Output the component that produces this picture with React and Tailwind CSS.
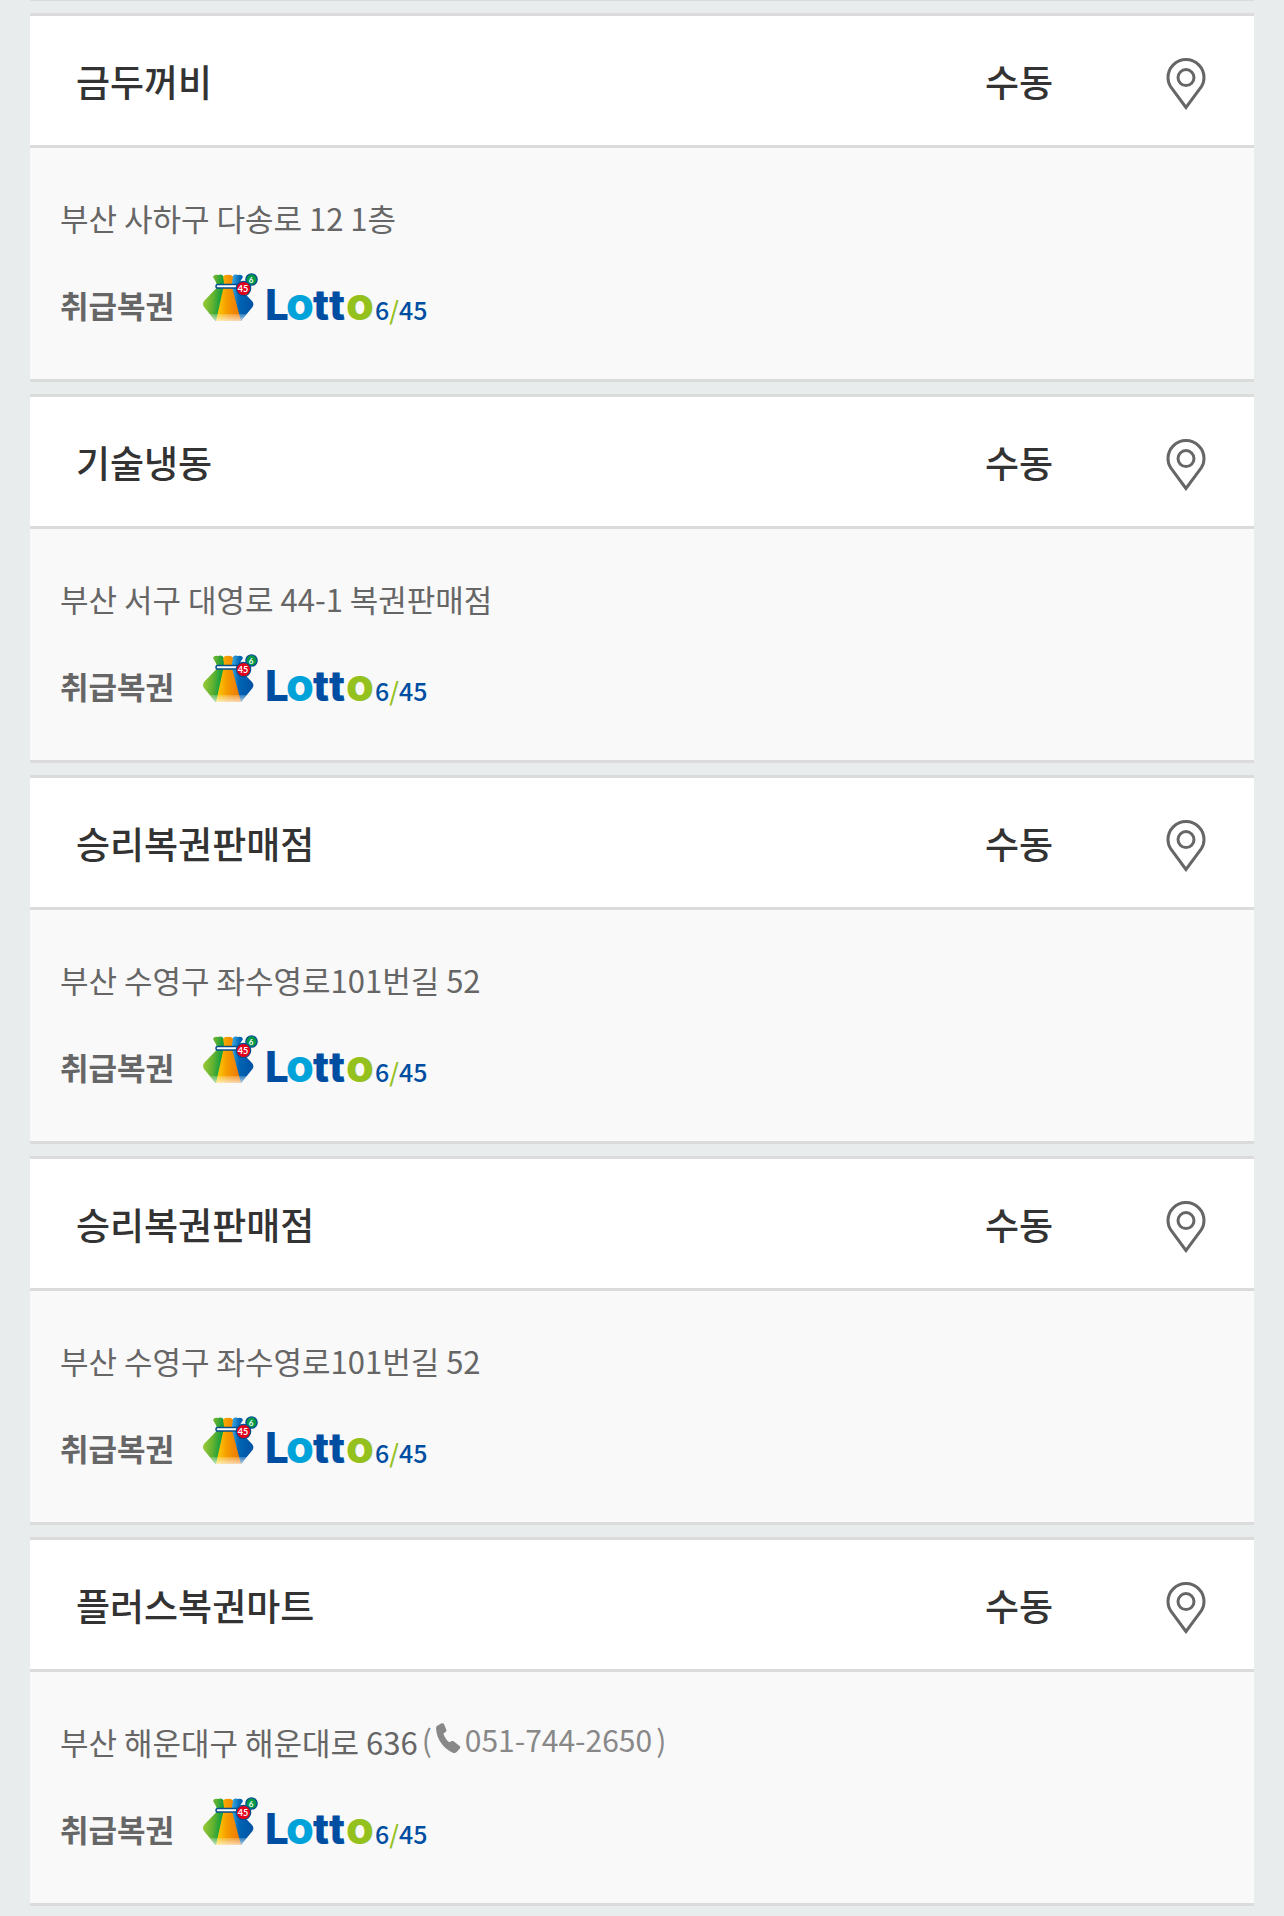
import React from "react";

const stores = [
  { id: 1, name: "금두꺼비", type: "수동", address: "부산 사하구 다송로 12 1층" },
  { id: 2, name: "기술냉동", type: "수동", address: "부산 서구 대영로 44-1 복권판매점" },
  { id: 3, name: "승리복권판매점", type: "수동", address: "부산 수영구 좌수영로101번길 52" },
  { id: 4, name: "승리복권판매점", type: "수동", address: "부산 수영구 좌수영로101번길 52" },
  { id: 5, name: "플러스복권마트", type: "수동", address: "부산 해운대구 해운대로 636", phone: "051-744-2650" },
];

function PinIcon() {
  return (
    <svg width="40" height="52" viewBox="0 0 40 52" fill="none" stroke="#666" strokeWidth="3" aria-hidden="true">
      <path d="M20 49.5 L4.6 28.6 C2.6 25.8 2 23 2 19.6 C2 9.6 10 1.6 20 1.6 C30 1.6 38 9.6 38 19.6 C38 23 37.4 25.8 35.4 28.6 Z" />
      <circle cx="20" cy="19.6" r="8" />
    </svg>
  );
}

function PhoneIcon() {
  return (
    <svg width="25" height="38" viewBox="0 0 25 38" fill="#888" aria-hidden="true">
      <path d="M1.2 3.4 L5.6 0.4 C6.6 -0.1 7.6 0.2 8 1.2 L10.4 8.6 C10.7 9.6 10.3 10.4 9.6 11 L7.4 12.8 C8.4 17 10.4 20.6 13.2 23.6 L15.4 22.2 C16.1 21.8 17 21.8 17.6 22.4 L23.6 28.2 C24.4 29.1 24.5 30 23.8 31 L20.4 35.8 C19.4 36.8 18 37 16.8 36.4 C7.6 31 1 20.4 0.1 7.6 C0 5.6 0.2 4.3 1.2 3.4 Z" transform="translate(0 3) scale(1 0.82)" />
    </svg>
  );
}

function LottoLogo({ id }) {
  return (
    <svg width="228" height="66" viewBox="0 -1 228 66" role="img" aria-label="Lotto 6/45">
      <defs>
        <linearGradient id={`green-${id}`} x1="0" y1="0.3" x2="1" y2="0.5">
          <stop offset="0" stopColor="#a5cd39" />
          <stop offset="0.45" stopColor="#5fb130" />
          <stop offset="0.8" stopColor="#009a44" />
        </linearGradient>
        <linearGradient id={`orange-${id}`} x1="0" y1="0" x2="1" y2="0">
          <stop offset="0" stopColor="#ffd200" />
          <stop offset="0.45" stopColor="#f59a00" />
          <stop offset="1" stopColor="#ec7404" />
        </linearGradient>
        <linearGradient id={`blue-${id}`} x1="0" y1="0" x2="1" y2="0.1">
          <stop offset="0" stopColor="#4ab5e8" />
          <stop offset="0.4" stopColor="#0065b5" />
          <stop offset="1" stopColor="#0052a4" />
        </linearGradient>
        <linearGradient id={`shine-${id}`} x1="0" y1="0" x2="0" y2="1">
          <stop offset="0" stopColor="#fff" stopOpacity="0.2" />
          <stop offset="1" stopColor="#fff" stopOpacity="0.7" />
        </linearGradient>
      </defs>

      {/* money bag */}
      <path d="M11 4 Q12 1 16 2 Q20 0.5 22 4 L22 14 L26 14 L15.5 48 L13.5 48 L2 34 Q0 31 2 28 L15.5 14 Q14 8 11 4 Z" fill={`url(#green-${id})`} />
      <path d="M30 4 Q32 0.5 36 2 Q40 1 41 4 Q37 9 36.5 14 L50 28 Q52.5 31 50.5 34 L39 48 L36 48 L29 14 Z" fill={`url(#blue-${id})`} />
      <path d="M21 4 Q23 1 26 2 Q29 1 31 4 Q29.5 9 30 14 L39 48 L14 48 L21.5 14 Q22.5 9 21 4 Z" fill={`url(#orange-${id})`} />
      <path d="M8 41 L45 41 L39 48 L13.5 48 Z" fill={`url(#shine-${id})`} />
      <rect x="14" y="11.5" width="24" height="3.6" rx="1.8" fill="#fff" stroke="#00508f" strokeWidth="1.5" />
      <circle cx="49.5" cy="6.5" r="5.6" fill="#009a44" stroke="#00508f" strokeWidth="1.4" />
      <circle cx="41.5" cy="15.5" r="7.2" fill="#e3001b" stroke="#00508f" strokeWidth="1.2" />
      <text x="49" y="9.5" textAnchor="middle" fontSize="8" className="font-['Lato'] font-bold" fill="#fff">6</text>
      <text x="41" y="19" textAnchor="middle" fontSize="9" className="font-['Lato'] font-bold" fill="#fff">45</text>

      {/* wordmark */}
      <text y="47" className="font-['Inter'] font-extrabold" fill="#004ea2">
        <tspan x="63" fontSize="42">L</tspan>
        <tspan x="84" fontSize="45" fill="#00a3d9">o</tspan>
        <tspan x="111" fontSize="42">t</tspan>
        <tspan x="127" fontSize="42">t</tspan>
        <tspan x="144" fontSize="45" fill="#95c11f">o</tspan>
      </text>
      <text x="173" y="47" fontSize="25" className="font-medium" fill="#004ea2">
        6<tspan fill="#95c11f">/</tspan>45
      </text>
    </svg>
  );
}

function StoreCard({ store }) {
  return (
    <li className="border-y-3 border-[#dbdbdb] bg-[#f9f9f9]">
      <div className="flex h-[132px] items-center border-b-3 border-[#dbdbdb] bg-white text-[37px] leading-[56px] font-medium text-[#333]">
        <h2 className="flex-1 pl-[46px]">{store.name}</h2>
        <span className="w-[198px] text-center">{store.type}</span>
        <div className="flex w-[136px] justify-center pt-1.5">
          <button type="button" aria-label={`${store.name} 위치보기`}>
            <PinIcon />
          </button>
        </div>
      </div>

      <div className="px-[30px] pt-[46px] pb-[41px] text-[31px] leading-[48px] text-[#666]">
        <p className="flex items-start">
          {store.address}
          {store.phone && (
            <a href={`tel:${store.phone}`} className="ml-1 flex items-center gap-1 text-[30px] leading-[42px] text-[#888]">
              (<PhoneIcon />
              <span>{store.phone}</span> )
            </a>
          )}
        </p>
        <div className="mt-[30px] flex items-center gap-7">
          <strong className="font-bold">취급복권</strong>
          <LottoLogo id={store.id} />
        </div>
      </div>
    </li>
  );
}

export default function App() {
  return (
    <main className="min-h-screen bg-[#e8eced] px-[30px] pb-2.5 font-['Noto_Sans_CJK_KR',sans-serif]">
      <ul className="flex flex-col gap-3 border-t border-[#dbdbdb] pt-3">
        {stores.map((store) => (
          <StoreCard key={store.id} store={store} />
        ))}
      </ul>
    </main>
  );
}
